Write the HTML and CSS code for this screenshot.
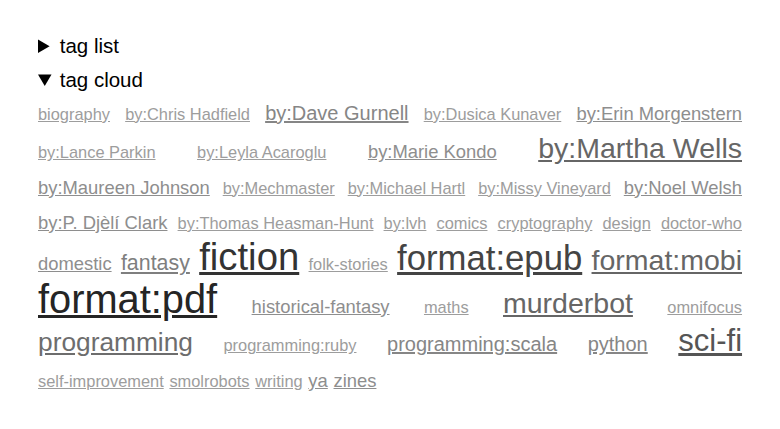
FILE: index.html
```html
<!DOCTYPE html>
<html>
<head>
<meta charset="utf-8">
<title>tags</title>
<link rel="stylesheet" href="styles.css">
</head>
<body>
<main class="page">
  <details class="section">
    <summary class="section-title">tag list</summary>
  </details>
  <details class="section" open>
    <summary class="section-title">tag cloud</summary>
    <div class="cloud">
      <a class="tag s1" href="#">biography</a>
      <a class="tag s1" href="#">by:Chris Hadfield</a>
      <a class="tag s3" href="#">by:Dave Gurnell</a>
      <a class="tag s1" href="#">by:Dusica Kunaver</a>
      <a class="tag s2" href="#">by:Erin Morgenstern</a>
      <a class="tag s1" href="#">by:Lance Parkin</a>
      <a class="tag s1" href="#">by:Leyla Acaroglu</a>
      <a class="tag s2" href="#">by:Marie Kondo</a>
      <a class="tag s6" href="#">by:Martha Wells</a>
      <a class="tag s2" href="#">by:Maureen Johnson</a>
      <a class="tag s1" href="#">by:Mechmaster</a>
      <a class="tag s1" href="#">by:Michael Hartl</a>
      <a class="tag s1" href="#">by:Missy Vineyard</a>
      <a class="tag s2" href="#">by:Noel Welsh</a>
      <a class="tag s2" href="#">by:P. Djèlí Clark</a>
      <a class="tag s1" href="#">by:Thomas Heasman-Hunt</a>
      <a class="tag s1" href="#">by:lvh</a>
      <a class="tag s1" href="#">comics</a>
      <a class="tag s1" href="#">cryptography</a>
      <a class="tag s1" href="#">design</a>
      <a class="tag s1" href="#">doctor-who</a>
      <a class="tag s2" href="#">domestic</a>
      <a class="tag s4" href="#">fantasy</a>
      <a class="tag s9" href="#">fiction</a>
      <a class="tag s1" href="#">folk-stories</a>
      <a class="tag s8" href="#">format:epub</a>
      <a class="tag s6" href="#">format:mobi</a>
      <a class="tag s10" href="#">format:pdf</a>
      <a class="tag s2" href="#">historical-fantasy</a>
      <a class="tag s1" href="#">maths</a>
      <a class="tag s6" href="#">murderbot</a>
      <a class="tag s1" href="#">omnifocus</a>
      <a class="tag s5" href="#">programming</a>
      <a class="tag s1" href="#">programming:ruby</a>
      <a class="tag s3" href="#">programming:scala</a>
      <a class="tag s3" href="#">python</a>
      <a class="tag s7" href="#">sci-fi</a>
      <a class="tag s1" href="#">self-improvement</a>
      <a class="tag s1" href="#">smolrobots</a>
      <a class="tag s1" href="#">writing</a>
      <a class="tag s2" href="#">ya</a>
      <a class="tag s2" href="#">zines</a>
    </div>
  </details>
</main>
</body>
</html>
```
FILE: styles.css
```css
html, body {
  background: #ffffff;
}

body {
  margin: 8px;
  font-family: "Liberation Sans", Arial, Helvetica, sans-serif;
  font-size: 20.5px;
  line-height: 34.4px;
  color: #000000;
}

.page {
  padding: 21px 30px;
}

.section-title {
  cursor: pointer;
}

.cloud {
  margin-top: -2px;
  text-align: justify;
}

.tag {
  display: inline-block;
  text-decoration: underline;
  white-space: nowrap;
}

.s1  { font-size: 16.4px; color: #9d9d9d; }
.s2  { font-size: 18.4px; color: #8e8e8e; }
.s3  { font-size: 20px;   color: #868686; }
.s4  { font-size: 21.4px; color: #7f7f7f; }
.s5  { font-size: 26.3px; color: #6d6d6d; }
.s6  { font-size: 28.5px; color: #666666; }
.s7  { font-size: 31px;   color: #555555; }
.s8  { font-size: 34.7px; color: #444444; }
.s9  { font-size: 38.3px; color: #333333; }
.s10 { font-size: 39.8px; color: #252525; }
```
